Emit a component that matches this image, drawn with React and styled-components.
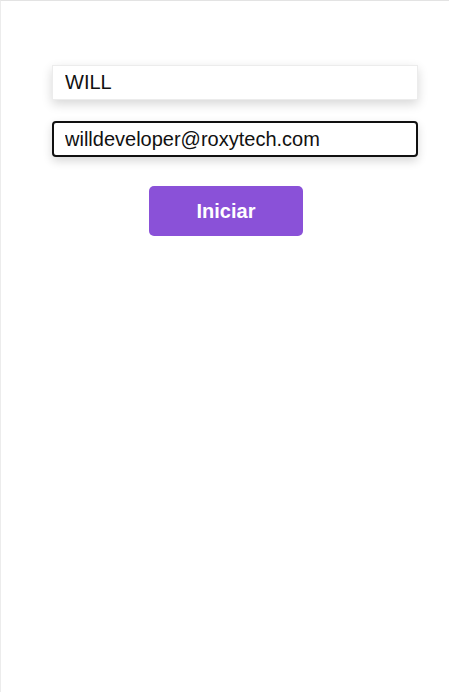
import React, { useEffect, useRef } from "react";
import styled, { createGlobalStyle } from "styled-components";

const GlobalStyle = createGlobalStyle`
  html, body {
    margin: 0;
    padding: 0;
    background: #ffffff;
    font-family: "Liberation Sans", Arial, sans-serif;
  }
`;

const Page = styled.div`
  min-height: 692px;
  box-sizing: border-box;
  border-top: 1px solid #e3e3e3;
  border-left: 1px solid #ececec;
  display: flex;
  flex-direction: column;
`;

const Form = styled.form`
  display: flex;
  flex-direction: column;
  gap: 21px;
  padding: 64px 31px 0 51px;
`;

const TextInput = styled.input`
  box-sizing: border-box;
  width: 100%;
  height: ${({ $focused }) => ($focused ? "36px" : "35px")};
  padding: 0 0 0 ${({ $focused }) => ($focused ? "11px" : "12px")};
  font-family: "Liberation Sans", Arial, sans-serif;
  font-size: 20px;
  color: #111111;
  background: #ffffff;
  border: ${({ $focused }) =>
    $focused ? "2px solid #101010" : "1px solid #ececec"};
  border-radius: ${({ $focused }) => ($focused ? "4px" : "0")};
  box-shadow: 0 4px 10px rgba(0, 0, 0, 0.16);
  outline: none;
  caret-color: #000000;
`;

const Actions = styled.div`
  display: flex;
  justify-content: center;
  padding-top: 29px;
  padding-left: 2px;
`;

const SubmitButton = styled.button`
  width: 154px;
  height: 50px;
  border: none;
  border-radius: 5px;
  background: #8a51d8;
  color: #ffffff;
  font-family: "Liberation Sans", Arial, sans-serif;
  font-size: 20px;
  font-weight: bold;
  cursor: pointer;
`;

export default function App() {
  const emailRef = useRef(null);

  useEffect(() => {
    const el = emailRef.current;
    if (el) {
      el.focus();
      const end = el.value.length;
      try {
        el.setSelectionRange(end, end);
      } catch (e) {
        // ignore
      }
    }
  }, []);

  return (
    <>
      <GlobalStyle />
      <Page>
        <Form id="login" onSubmit={(e) => e.preventDefault()}>
          <TextInput type="text" defaultValue="WILL" />
          <TextInput
            ref={emailRef}
            type="text"
            inputMode="email"
            defaultValue="willdeveloper@roxytech.com"
            $focused
          />
        </Form>
        <Actions>
          <SubmitButton type="submit" form="login">
            Iniciar
          </SubmitButton>
        </Actions>
      </Page>
    </>
  );
}
